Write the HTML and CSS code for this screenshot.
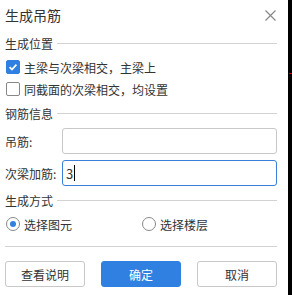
FILE: index.html
```html
<!DOCTYPE html>
<html lang="zh">
<head>
    <meta charset="UTF-8">
    <title>生成吊筋</title>
    <link rel="stylesheet" href="styles.css">
</head>
<body>

    <div class="dialogo">
        <div class="cabecera">
            <span class="titulo">生成吊筋</span>
            <svg class="cerrar" width="11" height="11" viewBox="0 0 11 11">
                <path d="M0.5 0.5 L10.5 10.5 M10.5 0.5 L0.5 10.5" stroke="#888" stroke-width="1.2" fill="none"/>
            </svg>
        </div>

        <div class="grupo">生成位置</div>
        <div class="fila">
            <span class="check activo">
                <svg width="14" height="14" viewBox="0 0 14 14">
                    <path d="M3 7.2 L5.8 10 L11 4.3" stroke="#fff" stroke-width="2" fill="none"/>
                </svg>
            </span>
            <span>主梁与次梁相交，主梁上</span>
        </div>
        <div class="fila">
            <span class="check"></span>
            <span>同截面的次梁相交，均设置</span>
        </div>

        <div class="grupo">钢筋信息</div>
        <div class="campo">
            <label>吊筋:</label>
            <div class="entrada"></div>
        </div>
        <div class="campo">
            <label>次梁加筋:</label>
            <div class="entrada foco">3<span class="cursor"></span></div>
        </div>

        <div class="grupo grupo-ultimo">生成方式</div>
        <div class="fila radios">
            <div class="opcion"><span class="radio activo"></span><span>选择图元</span></div>
            <div class="opcion"><span class="radio"></span><span>选择楼层</span></div>
        </div>

        <div class="separador"></div>

        <div class="botones">
            <button class="boton">查看说明</button>
            <button class="boton primario">确定</button>
            <button class="boton">取消</button>
        </div>
    </div>

    <div class="marca"></div>

</body>
</html>
```

FILE: styles.css
```css
body {
    margin: 0;
    background-color: #000;
    font-family: "Noto Sans CJK SC", "Noto Sans", sans-serif;
    font-size: 12px;
    color: #333;
    position: relative;
    height: 295px;
    overflow: hidden;
}

.dialogo {
    background: white;
    width: 288px;
    height: 295px;
    box-sizing: border-box;
    padding: 0 11px 0 5px;
}

.cabecera {
    height: 30px;
    display: flex;
    align-items: center;
    justify-content: space-between;
}

.titulo {
    font-size: 14px;
}

.cerrar {
    margin-right: 1px;
}

.grupo {
    display: flex;
    align-items: center;
    height: 20px;
    margin-top: 3px;
}

.grupo::after {
    content: "";
    flex: 1;
    height: 1px;
    background: #d2d2d2;
    margin-left: 4px;
}

.fila {
    display: flex;
    align-items: center;
    height: 22px;
}

.grupo + .fila {
    margin-top: 3px;
}

.check {
    width: 12px;
    height: 12px;
    border: 1px solid #888;
    border-radius: 2px;
    margin: 0 4px 0 1px;
    display: flex;
    align-items: center;
    justify-content: center;
}

.check.activo {
    background: #2f80e0;
    border-color: #2f80e0;
}

.campo {
    display: flex;
    align-items: center;
    height: 26px;
    margin-top: 6px;
}

.grupo + .campo {
    margin-top: 5px;
}

.campo label {
    width: 57px;
}

.entrada {
    flex: 1;
    height: 26px;
    box-sizing: border-box;
    border: 1px solid #c8c8c8;
    border-radius: 3px;
    padding-left: 3px;
    display: flex;
    align-items: center;
    font-size: 13px;
}

.entrada.foco {
    border-color: #3a80d8;
}

.cursor {
    width: 1px;
    height: 16px;
    background: #000;
    margin-left: 1px;
}

.grupo-ultimo {
    margin-top: 4px;
}

.radios {
    margin-top: 2px;
}

.opcion {
    display: flex;
    align-items: center;
    width: 139px;
}

.radio {
    width: 12px;
    height: 12px;
    border: 1px solid #888;
    border-radius: 50%;
    margin: 0 4px 0 1px;
    position: relative;
}

.radio.activo::after {
    content: "";
    position: absolute;
    left: 3px;
    top: 3px;
    width: 6px;
    height: 6px;
    border-radius: 50%;
    background: #2f80e0;
}

.separador {
    height: 1px;
    background: #d2d2d2;
    margin-top: 11px;
}

.botones {
    display: flex;
    gap: 16px;
    margin-top: 14px;
}

.boton {
    width: 80px;
    height: 26px;
    font-family: inherit;
    font-size: 12px;
    color: #333;
    background: white;
    border: 1px solid #c8c8c8;
    border-radius: 3px;
    padding: 0;
}

.boton.primario {
    background: #2f80e0;
    border-color: #2f80e0;
    color: white;
}

.marca {
    position: absolute;
    left: 289px;
    top: 73px;
    width: 3px;
    height: 1px;
    background: #c00;
}
```
